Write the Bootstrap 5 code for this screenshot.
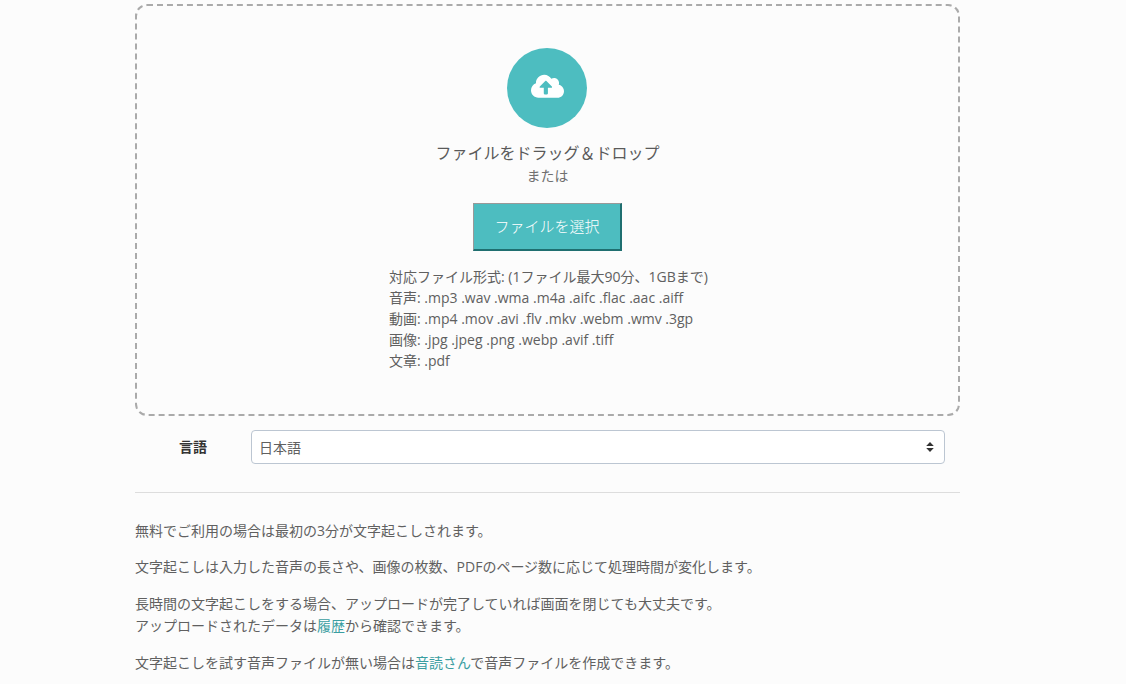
<!DOCTYPE html>
<html lang="ja">
<head>
<meta charset="utf-8">
<title>文字起こし</title>
<link href="https://cdn.jsdelivr.net/npm/bootstrap@5.3.0/dist/css/bootstrap.min.css" rel="stylesheet">
<style>
html,body{height:684px;overflow:hidden}
body{background:#fcfcfc;color:#606060;font-family:"Open Sans","Noto Sans CJK JP",sans-serif;font-size:14px;line-height:21px}
.page-wrap{width:825px;margin-left:135px;padding-top:4px}
.drop-box{height:412px;border:2px dashed #aaa;border-radius:12px;padding-top:42px}
.up-circle{width:80px;height:80px;border-radius:50%;background:#4dbdc0;margin-left:370px}
.cloud-icon{margin-bottom:3px}
.drop-title{font-size:16px;line-height:24px;margin-top:13px;color:#5a5a5a}
.drop-or{line-height:21px;margin-top:0;color:#707070}
.pick-btn{width:149px;height:48px;margin-top:17px;padding:0;background:#4dbdc0;color:#fff;border:1px solid #999;border-right:2px solid #1f6f70;border-bottom:2px solid #1f6f70;border-radius:0;font-size:15px;font-weight:300}
.pick-btn:hover{background:#4dbdc0;color:#fff}
.formats{margin:15px 0 0 252px}
.lang-row{margin-top:14px;height:34px}
.lang-label{width:116px;text-align:center;color:#333;font-weight:700;font-size:14px;line-height:34px}
.lang-select{width:694px;height:34px;padding:0 7px;font-size:14px;color:#606060;border-color:#bcc6d2;border-radius:4px;background-color:#fff;background-image:none;font-family:inherit}
.select-wrap{position:relative}
.select-arrows{position:absolute;right:11px;top:12px;pointer-events:none}
.sep{margin:28px 0 26.75px;border:0;border-top:1px solid #ddd;opacity:1}
.note{margin-bottom:15px;line-height:21.7px}
.note a{color:#3a9ea1;text-decoration:none}
</style>
</head>
<body>
<div class="page-wrap">
  <div class="drop-box text-center">
    <div class="up-circle d-flex align-items-center justify-content-center">
      <svg class="cloud-icon" width="33" height="26.4" viewBox="0 0 640 512" aria-hidden="true"><path fill="#fff" d="M537.6 226.6c4.100-10.700 6.400-22.400 6.400-34.600 0-53-43-96-96-96-19.700 0-38.100 6-53.300 16.200C367 64.200 315.300 32 256 32c-88.400 0-160 71.600-160 160 0 2.700.1 5.400.2 8.100C40.200 219.800 0 273.200 0 336c0 79.500 64.500 144 144 144h368c70.700 0 128-57.300 128-128 0-61.900-44-113.600-102.400-125.400zM393.400 288H328v112c0 8.800-7.200 16-16 16h-48c-8.800 0-16-7.200-16-16V288h-65.400c-14.300 0-21.400-17.200-11.300-27.300l105.400-105.400c6.200-6.200 16.400-6.200 22.600 0l105.400 105.400c10.100 10.100 3 27.300-11.300 27.300z"/></svg>
    </div>
    <div class="drop-title">ファイルをドラッグ＆ドロップ</div>
    <div class="drop-or">または</div>
    <button type="button" class="btn pick-btn">ファイルを選択</button>
    <div class="formats text-start">
      対応ファイル形式: (1ファイル最大90分、1GBまで)<br>
      音声: .mp3 .wav .wma .m4a .aifc .flac .aac .aiff<br>
      動画: .mp4 .mov .avi .flv .mkv .webm .wmv .3gp<br>
      画像: .jpg .jpeg .png .webp .avif .tiff<br>
      文章: .pdf
    </div>
  </div>
  <div class="lang-row d-flex">
    <label class="lang-label" for="lang">言語</label>
    <div class="select-wrap">
      <select id="lang" class="form-select lang-select"><option>日本語</option></select>
      <svg class="select-arrows" width="8" height="10" viewBox="0 0 8 10" aria-hidden="true"><path fill="#333" d="M4 0l3.800 4H.2zM4 10l3.800-4H.2z"/></svg>
    </div>
  </div>
  <hr class="sep">
  <p class="note">無料でご利用の場合は最初の3分が文字起こしされます。</p>
  <p class="note">文字起こしは入力した音声の長さや、画像の枚数、PDFのページ数に応じて処理時間が変化します。</p>
  <p class="note">長時間の文字起こしをする場合、アップロードが完了していれば画面を閉じても大丈夫です。<br>アップロードされたデータは<a href="#">履歴</a>から確認できます。</p>
  <p class="note">文字起こしを試す音声ファイルが無い場合は<a href="#">音読さん</a>で音声ファイルを作成できます。</p>
</div>
<script src="https://cdn.jsdelivr.net/npm/bootstrap@5.3.0/dist/js/bootstrap.bundle.min.js"></script>
</body>
</html>
